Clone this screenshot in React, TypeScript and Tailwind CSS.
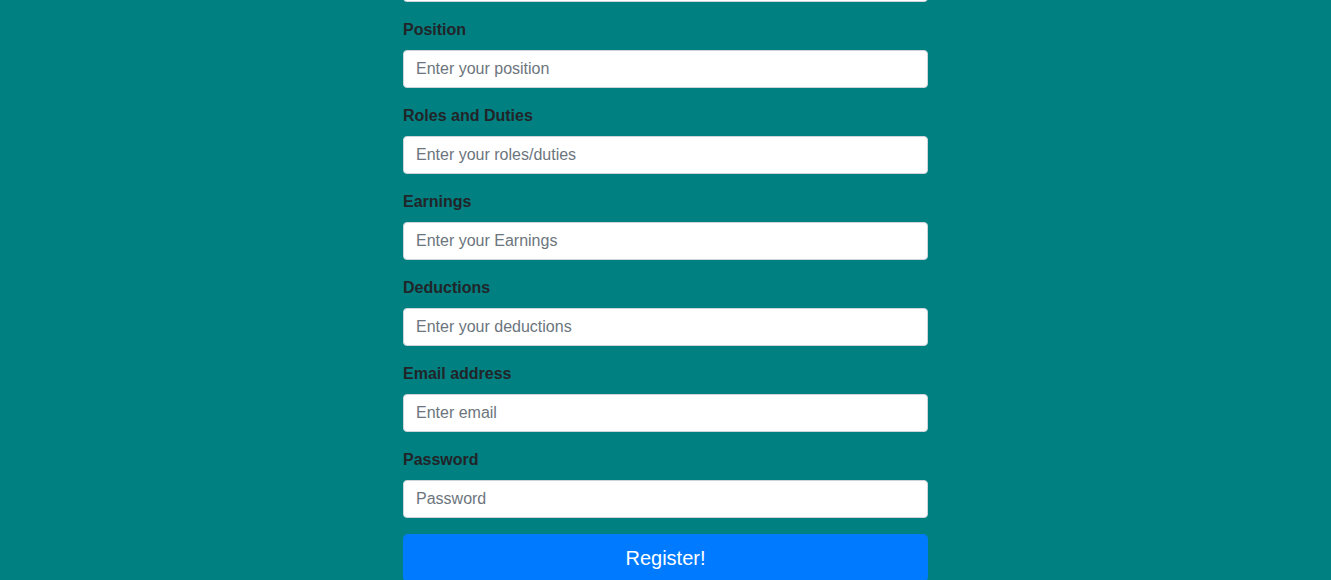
import React from "react";

const fields = [
  { id: "position", label: "Position", placeholder: "Enter your position", type: "text" },
  { id: "roles", label: "Roles and Duties", placeholder: "Enter your roles/duties", type: "text" },
  { id: "earnings", label: "Earnings", placeholder: "Enter your Earnings", type: "text" },
  { id: "deductions", label: "Deductions", placeholder: "Enter your deductions", type: "text" },
  { id: "email", label: "Email address", placeholder: "Enter email", type: "email" },
  { id: "password", label: "Password", placeholder: "Password", type: "password" },
];

const inputClass =
  "block h-[38px] w-full rounded-[4px] border border-[#ced4da] bg-white px-3 text-base text-[#495057] placeholder:text-[#6c757d] outline-none";

export default function App() {
  return (
    <div
      className="min-h-[580px] w-full overflow-hidden bg-[#008080]"
      style={{ fontFamily: '"Liberation Sans", Arial, sans-serif' }}
    >
      <form className="mx-auto w-[525px]">
        {/* previous field, scrolled mostly out of view */}
        <div className="-mt-[36px] mb-4">
          <input type="text" className={inputClass} />
        </div>
        {fields.map((field) => (
          <div key={field.id} className="mb-4">
            <label htmlFor={field.id} className="mb-2 block text-base font-bold leading-6 text-[#212529]">
              {field.label}
            </label>
            <input id={field.id} type={field.type} placeholder={field.placeholder} className={inputClass} />
          </div>
        ))}
        <button
          type="submit"
          className="block h-12 w-full rounded-[5px] bg-[#007bff] text-xl leading-[30px] text-white"
        >
          Register!
        </button>
      </form>
    </div>
  );
}
